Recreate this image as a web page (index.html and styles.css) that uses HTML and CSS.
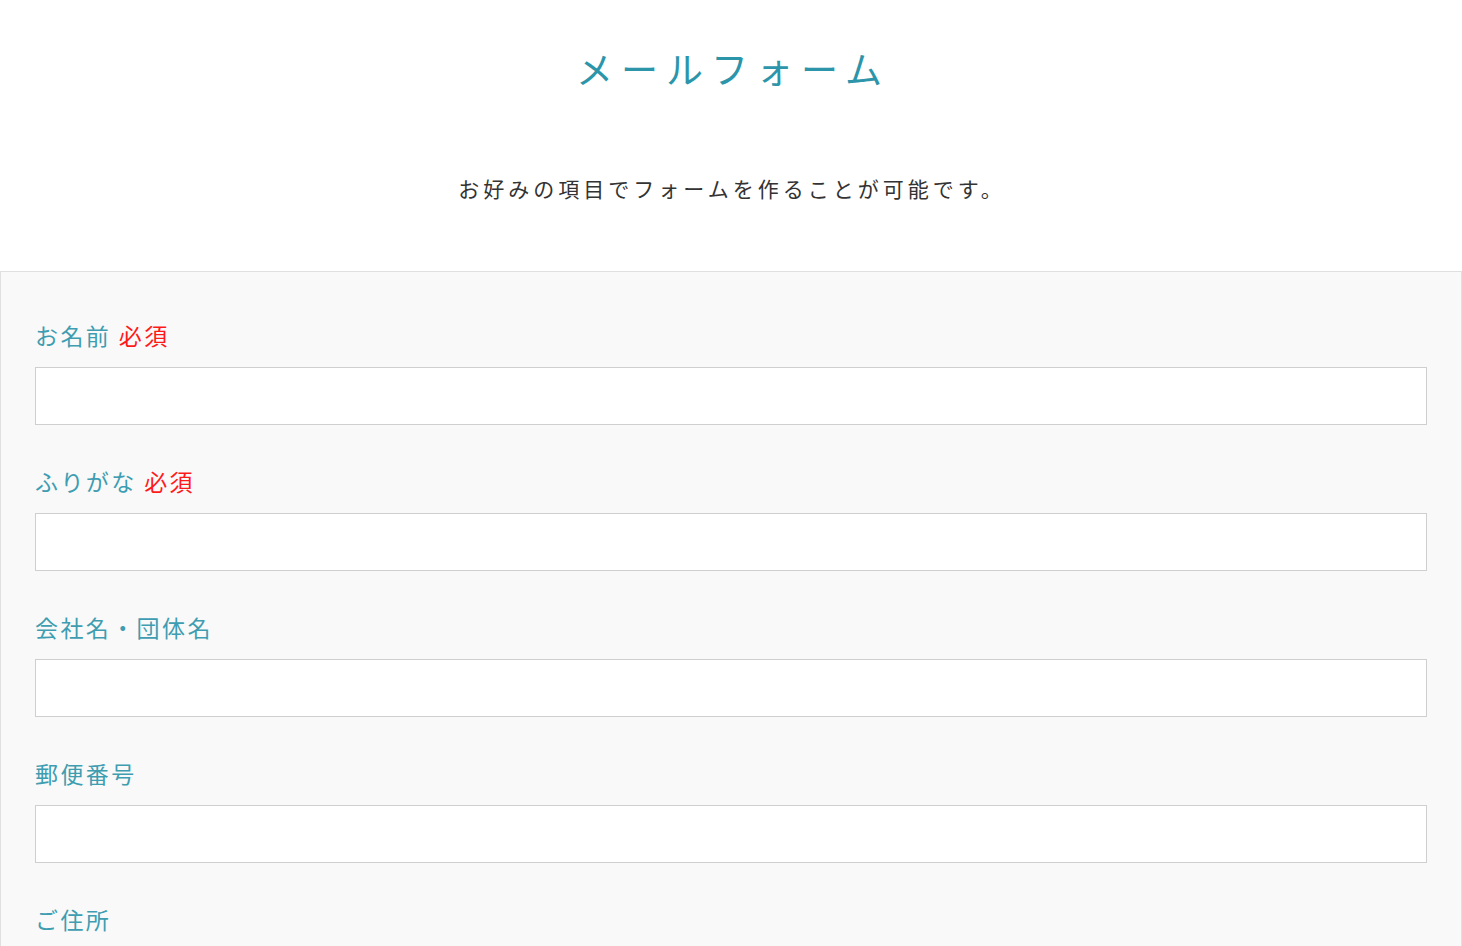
FILE: index.html
```html
<!DOCTYPE html>
<html lang="ja">
<head>
    <meta charset="UTF-8">
    <meta name="viewport" content="width=device-width, initial-scale=1.0">
    <title>メールフォーム</title>
    <link rel="stylesheet" href="styles.css">
</head>
<body>

    <header class="form-header">
        <h1 class="form-title">メールフォーム</h1>
        <p class="form-lead">お好みの項目でフォームを作ることが可能です。</p>
    </header>

    <!-- Form Panel -->
    <form class="form-panel">
        <div class="field">
            <label class="field-label" for="name">お名前 <span class="required">必須</span></label>
            <input class="field-input" type="text" id="name">
        </div>

        <div class="field">
            <label class="field-label" for="kana">ふりがな <span class="required">必須</span></label>
            <input class="field-input" type="text" id="kana">
        </div>

        <div class="field">
            <label class="field-label" for="company">会社名・団体名</label>
            <input class="field-input" type="text" id="company">
        </div>

        <div class="field">
            <label class="field-label" for="zip">郵便番号</label>
            <input class="field-input" type="text" id="zip">
        </div>

        <div class="field">
            <label class="field-label" for="address">ご住所</label>
            <input class="field-input" type="text" id="address">
        </div>

        <div class="field">
            <label class="field-label" for="tel">電話番号</label>
            <input class="field-input" type="text" id="tel">
        </div>
    </form>

</body>
</html>
```

FILE: styles.css
```css
body {
    margin: 0;
    padding: 0;
    background: #fff;
    font-family: "Noto Sans CJK JP", "Noto Sans", sans-serif;
    color: #333;
}

/* Header */
.form-header {
    text-align: center;
    padding-top: 41px;
}

.form-title {
    margin: 0;
    font-size: 37px;
    line-height: 54px;
    font-weight: 400;
    letter-spacing: 8px;
    padding-left: 4px;
    color: #2c95aa;
}

.form-lead {
    margin: 78px 0 0;
    font-size: 21px;
    line-height: 30px;
    letter-spacing: 4px;
    padding-left: 2px;
    color: #333;
}

/* Form Panel */
.form-panel {
    margin-top: 68px;
    background: #f9f9f9;
    border: 1px solid #e0e0e0;
    padding: 47px 34px 40px;
}

.field {
    display: flex;
    flex-direction: column;
    margin-bottom: 40px;
}

.field-label {
    font-size: 23px;
    line-height: 33px;
    letter-spacing: 2.4px;
    color: #3f9db1;
    margin-bottom: 15px;
}

.required {
    color: #ff1a1a;
}

.field-input {
    box-sizing: border-box;
    width: 100%;
    height: 58px;
    margin: 0;
    background: #fff;
    border: 1px solid #cfcfcf;
    font-size: 20px;
    padding: 0 12px;
}
```
